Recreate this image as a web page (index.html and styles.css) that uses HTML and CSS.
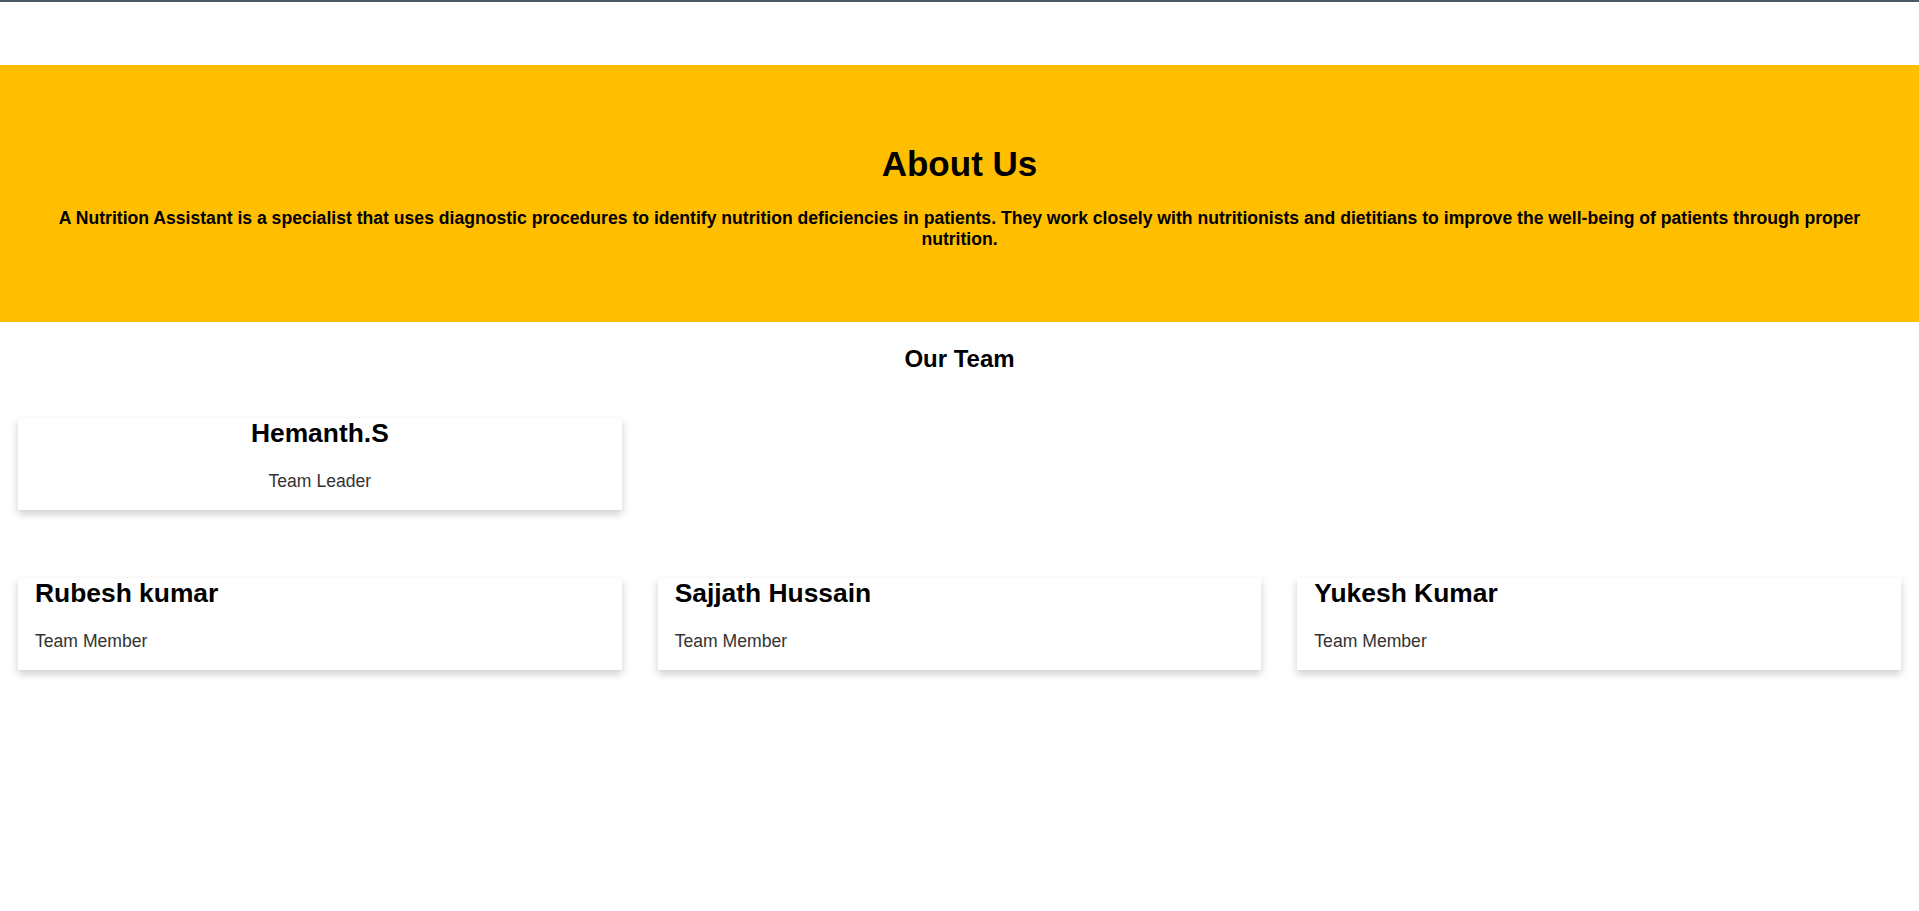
FILE: index.html
```html
<!DOCTYPE html>
<html lang="en">
<head>
<meta charset="utf-8">
<title>About Us</title>
<link rel="stylesheet" href="styles.css">
</head>
<body>
<div class="page">
<div class="topbar"></div>
<div class="nav"></div>
<section class="about">
  <h1 class="about-title">About Us</h1>
  <p class="about-text">A Nutrition Assistant is a specialist that uses diagnostic procedures to identify nutrition deficiencies in patients. They work closely with nutritionists and dietitians to improve the well-being of patients through proper nutrition.</p>
</section>
<h2 class="team-title">Our Team</h2>
<div class="row row-lead">
  <div class="card card-center">
    <h3 class="name">Hemanth.S</h3>
    <p class="role">Team Leader</p>
  </div>
</div>
<div class="row row-members">
  <div class="card">
    <h3 class="name">Rubesh kumar</h3>
    <p class="role">Team Member</p>
  </div>
  <div class="card">
    <h3 class="name">Sajjath Hussain</h3>
    <p class="role">Team Member</p>
  </div>
  <div class="card">
    <h3 class="name">Yukesh Kumar</h3>
    <p class="role">Team Member</p>
  </div>
</div>
</div>
</body>
</html>
```
FILE: styles.css
```css
html, body {
  margin: 0;
  padding: 0;
  background: #ffffff;
}
body {
  font-family: "Liberation Sans", Arial, sans-serif;
  color: #000;
}
.page {
  min-height: 100vh;
  box-sizing: border-box;
  padding-bottom: 40px;
}
.topbar {
  height: 2px;
  background: #4b5960;
}
.nav {
  height: 63px;
}
.about {
  background: #ffbf00;
  text-align: center;
  padding: 79px 50px 72px;
}
.about-title {
  font-size: 35px;
  font-weight: bold;
  margin: 0 0 24px;
}
.about-text {
  font-size: 17.6px;
  font-weight: bold;
  margin: 0;
}
.team-title {
  text-align: center;
  font-size: 24px;
  font-weight: bold;
  margin: 23px 0 45px;
}
.row {
  display: grid;
  grid-template-columns: repeat(3, 1fr);
  column-gap: 36px;
  padding: 0 18px;
}
.row-lead {
  margin-bottom: 68px;
}
.card {
  background: #fff;
  box-shadow: 0 4px 8px 0 rgba(0, 0, 0, 0.2);
  padding: 0 17px 18px;
}
.card-center {
  text-align: center;
}
.name {
  font-size: 26.4px;
  font-weight: bold;
  margin: 0 0 22px;
}
.role {
  font-size: 17.6px;
  color: #333;
  margin: 0;
}
```
